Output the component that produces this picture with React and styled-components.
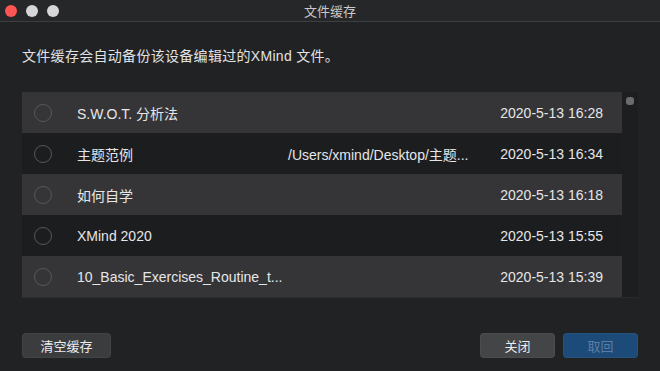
import React from "react";
import styled, { createGlobalStyle } from "styled-components";

const Global = createGlobalStyle`
  html, body { margin: 0; padding: 0; background: #212224; }
  body { font-family: "Liberation Sans", "Noto Sans CJK SC", sans-serif; -webkit-font-smoothing: antialiased; }
  * { box-sizing: border-box; }
`;

const Window = styled.div`
  width: 660px;
  height: 371px;
  background: #212224;
  display: flex;
  flex-direction: column;
  overflow: hidden;
`;

const TitleBar = styled.div`
  height: 22px;
  flex: none;
  background: #262729;
  border-bottom: 1px solid #3d3e40;
  display: flex;
  align-items: center;
  position: relative;
  padding-left: 5px;
  gap: 9px;
`;

const Light = styled.span`
  width: 12px;
  height: 12px;
  border-radius: 50%;
  background: ${(p) => p.$c};
  flex: none;
`;

const Title = styled.div`
  position: absolute;
  left: 0;
  right: 0;
  top: 0;
  bottom: 0;
  display: flex;
  align-items: center;
  justify-content: center;
  font-size: 13px;
  color: #c9c9cb;
  pointer-events: none;
`;

const Body = styled.div`
  flex: 1;
  display: flex;
  flex-direction: column;
  padding: 0 22px;
`;

const Desc = styled.div`
  margin-top: 25px;
  font-size: 14px;
  letter-spacing: 0.3px;
  line-height: 18px;
  color: #e2e2e4;
`;

const ListWrap = styled.div`
  margin-top: 27px;
  display: flex;
  height: 206px;
`;

const List = styled.div`
  flex: 1;
  display: flex;
  flex-direction: column;
  border-bottom: 1px solid #2c2d2f;
`;

const Row = styled.div`
  height: 41px;
  flex: none;
  display: flex;
  align-items: center;
  background: ${(p) => (p.$alt ? "#1c1d1f" : "#353537")};
  color: #e6e6e8;
  font-size: 14px;
`;

const Radio = styled.span`
  width: 18px;
  height: 18px;
  border-radius: 50%;
  border: 1px solid #56575a;
  margin-left: 12px;
  flex: none;
`;

const Name = styled.span`
  margin-left: 25px;
  width: 211px;
  white-space: nowrap;
  overflow: hidden;
`;

const Path = styled.span`
  flex: 1;
  white-space: nowrap;
`;

const DateText = styled.span`
  margin-right: 19px;
  white-space: nowrap;
`;

const ScrollTrack = styled.div`
  width: 16px;
  flex: none;
  background: #1d1e20;
  display: flex;
  justify-content: center;
  padding-top: 5px;
  border-bottom: 1px solid #2a2b2d;
`;

const Thumb = styled.span`
  width: 8px;
  height: 8px;
  border-radius: 3px;
  background: #6a6b6d;
`;

const Footer = styled.div`
  margin-top: 35px;
  display: flex;
  align-items: center;
`;

const Spacer = styled.div`
  flex: 1;
`;

const Button = styled.button`
  height: 25px;
  width: ${(p) => p.$w}px;
  border-radius: 4px;
  border: none;
  background: ${(p) => (p.$primary ? "#1d4b79" : p.$light ? "#444547" : "#3b3c3e")};
  color: ${(p) => (p.$primary ? "#5a7ea5" : "#ececee")};
  font-family: "Noto Sans CJK SC", sans-serif;
  font-size: 13px;
  padding: 0;
  margin-left: ${(p) => p.$ml || 0}px;
  box-shadow: inset 0 0 0 1px rgba(255,255,255,0.04);
`;

const rows = [
  { name: "S.W.O.T. 分析法", path: "", date: "2020-5-13 16:28" },
  { name: "主题范例", path: "/Users/xmind/Desktop/主题...", date: "2020-5-13 16:34" },
  { name: "如何自学", path: "", date: "2020-5-13 16:18" },
  { name: "XMind 2020", path: "", date: "2020-5-13 15:55" },
  { name: "10_Basic_Exercises_Routine_t...", path: "", date: "2020-5-13 15:39" },
];

export default function App() {
  return (
    <>
      <Global />
      <Window>
        <TitleBar>
          <Light $c="#fc5553" />
          <Light $c="#d6d6d8" />
          <Light $c="#d6d6d8" />
          <Title>文件缓存</Title>
        </TitleBar>
        <Body>
          <Desc>文件缓存会自动备份该设备编辑过的XMind 文件。</Desc>
          <ListWrap>
            <List>
              {rows.map((r, i) => (
                <Row key={i} $alt={i % 2 === 1}>
                  <Radio />
                  <Name>{r.name}</Name>
                  <Path>{r.path}</Path>
                  <DateText>{r.date}</DateText>
                </Row>
              ))}
            </List>
            <ScrollTrack>
              <Thumb />
            </ScrollTrack>
          </ListWrap>
          <Footer>
            <Button $w={89}>清空缓存</Button>
            <Spacer />
            <Button $w={75} $light>关闭</Button>
            <Button $w={75} $ml={8} $primary>取回</Button>
          </Footer>
        </Body>
      </Window>
    </>
  );
}
